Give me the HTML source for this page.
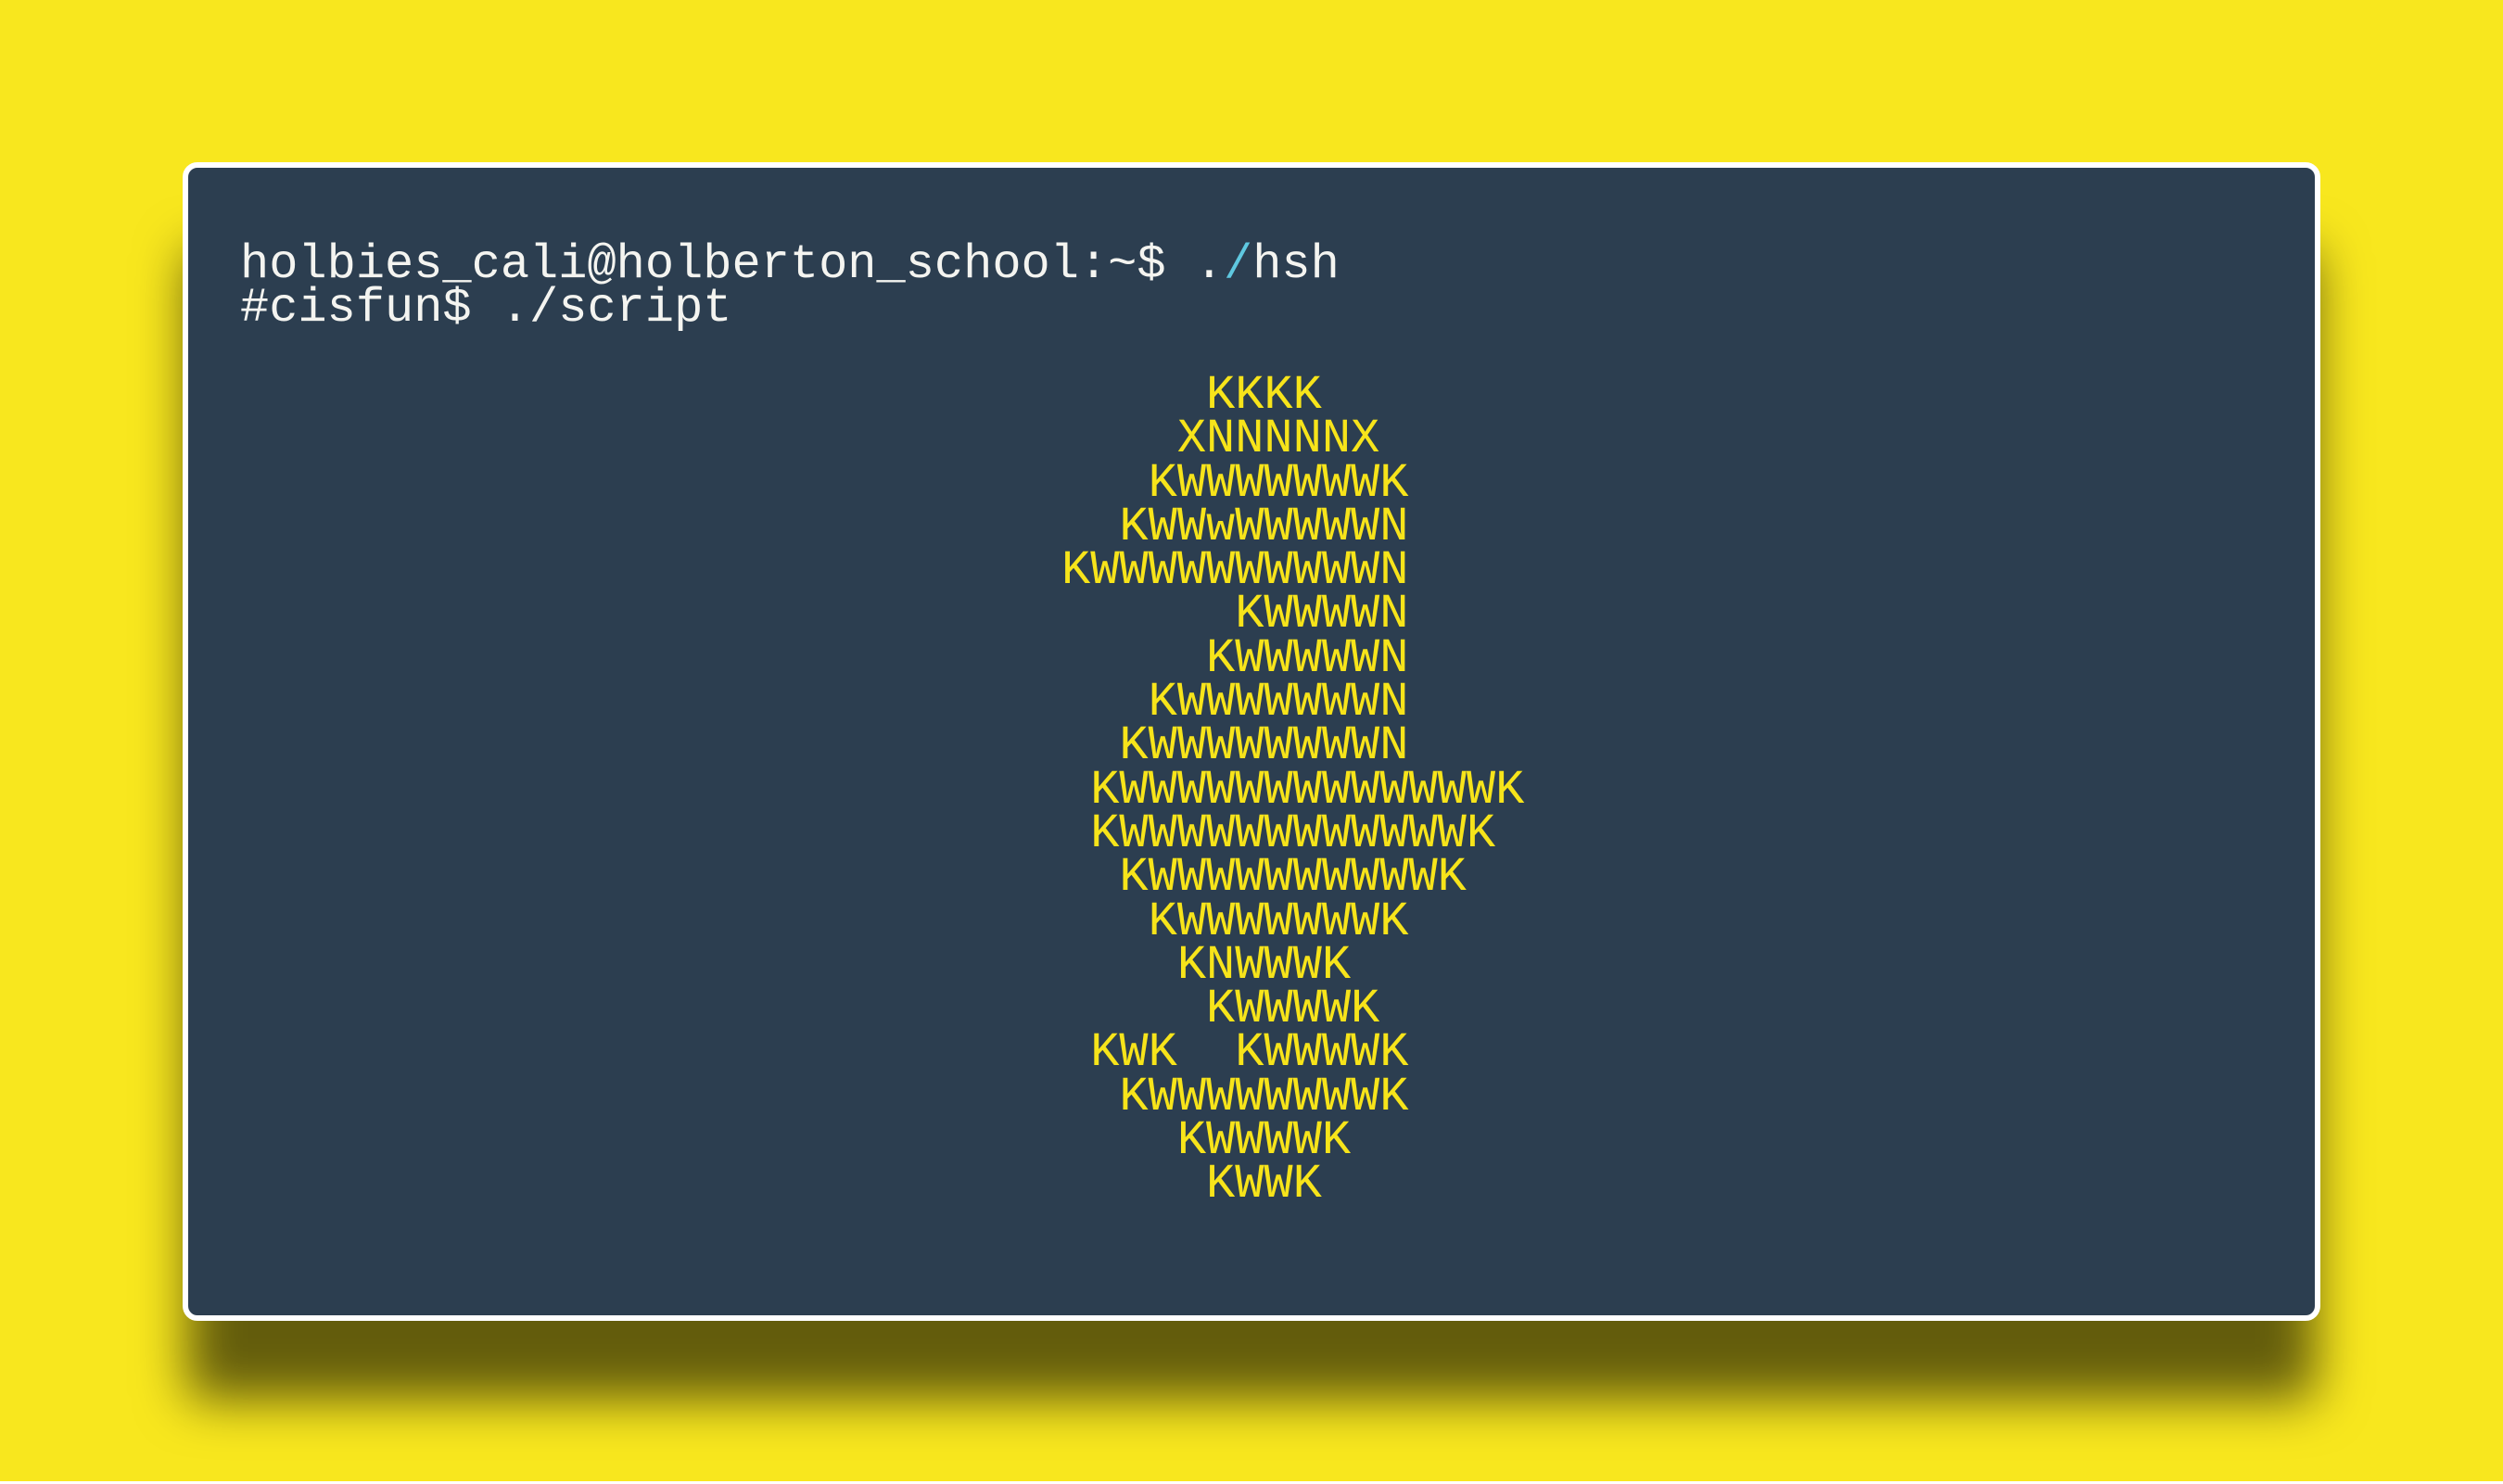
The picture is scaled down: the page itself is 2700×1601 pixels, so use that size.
<!DOCTYPE html>
<html><head><meta charset="utf-8"><style>
html,body{margin:0;padding:0;}
body{width:2700px;height:1601px;background:#f8e71e;position:relative;overflow:hidden;font-family:"Liberation Mono",monospace;}
.card{position:absolute;left:197px;top:175px;width:2294px;height:1238px;background:#2c3e50;border:6px solid #fff;border-radius:16px;box-shadow:0 90px 55px -5px rgba(0,0,0,0.6);}
.t{position:absolute;white-space:pre;font-size:52px;line-height:47.3px;}
.w{left:259px;top:262px;color:#f4f4f0;}
.y{left:1145px;top:403px;color:#f7e41a;}
.c{color:#5fc8e0;}
.bl{position:absolute;left:0;right:0;bottom:0;height:3px;background:#fff;}
</style></head><body>
<div class="card"></div>
<div class="t w">holbies_cali@holberton_school:~$ .<span class="c">/</span>hsh
#cisfun$ ./script</div>
<div class="t y">     KKKK
    XNNNNNX
   KWWWWWWWK
  KWWwWWWWWN
KWWWWWWWWWWN
      KWWWWN
     KWWWWWN
   KWWWWWWWN
  KWWWWWWWWN
 KWWWWWWWWWWWWWK
 KWWWWWWWWWWWWK
  KWWWWWWWWWWK
   KWWWWWWWK
    KNWWWK
     KWWWWK
 KWK  KWWWWK
  KWWWWWWWWK
    KWWWWK
     KWWK</div>
<div class="bl"></div>
</body></html>
